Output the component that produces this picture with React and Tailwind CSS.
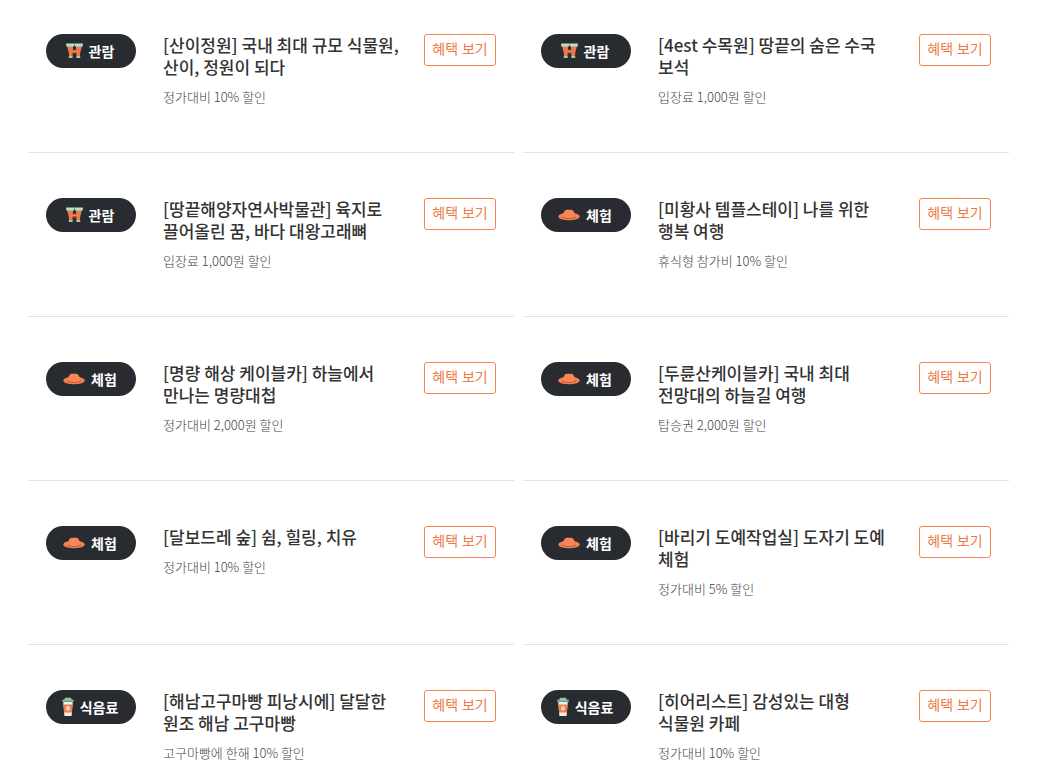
const items = [
  { type: '관람', title: '[산이정원] 국내 최대 규모 식물원, 산이, 정원이 되다', benefit: '정가대비 10% 할인' },
  { type: '관람', title: '[4est 수목원] 땅끝의 숨은 수국 보석', benefit: '입장료 1,000원 할인' },
  { type: '관람', title: '[땅끝해양자연사박물관] 육지로 끌어올린 꿈, 바다 대왕고래뼈', benefit: '입장료 1,000원 할인' },
  { type: '체험', title: '[미황사 템플스테이] 나를 위한 행복 여행', benefit: '휴식형 참가비 10% 할인' },
  { type: '체험', title: '[명량 해상 케이블카] 하늘에서 만나는 명량대첩', benefit: '정가대비 2,000원 할인' },
  { type: '체험', title: '[두륜산케이블카] 국내 최대 전망대의 하늘길 여행', benefit: '탑승권 2,000원 할인' },
  { type: '체험', title: '[달보드레 숲] 쉼, 힐링, 치유', benefit: '정가대비 10% 할인' },
  { type: '체험', title: '[바리기 도예작업실] 도자기 도예 체험', benefit: '정가대비 5% 할인' },
  { type: '식음료', title: '[해남고구마빵 피낭시에] 달달한 원조 해남 고구마빵', benefit: '고구마빵에 한해 10% 할인' },
  { type: '식음료', title: '[히어리스트] 감성있는 대형 식물원 카페', benefit: '정가대비 10% 할인' },
];

function BinocularsIcon() {
  return (
    <svg className="h-4 w-[17px] shrink-0" viewBox="0 0 17 16" aria-hidden="true">
      <path d="M1 3h6v4L6.500 13.500H3.200L2.600 9zM16 3h-6v4l.5 6.500h3.300l.6-4.500z" fill="#ee7a4a" />
      <path d="M6.400 6.400h4.200v4.200H6.400z" fill="#9a4a32" />
      <path d="M5.500 7.600h6v1.700h-6z" fill="#f58a5c" />
      <path d="M0 .5h8v3H.4zM9 .5h8l-.4 3H9z" fill="#b2e2c9" />
      <path d="M8 .5h1v2H8z" fill="#8cc0a8" />
      <path d="M2.800 13h3.800v2H2.800zM10.400 13h3.800v2h-3.800z" fill="#9bccb3" />
    </svg>
  );
}

function HatIcon() {
  return (
    <svg className="h-3 w-[22px] shrink-0" viewBox="0 0 22 12" aria-hidden="true">
      <ellipse cx="11" cy="7.400" rx="10.800" ry="3.900" fill="#f58052" />
      <path d="M4.500 8C5.400 3.500 6.500.8 8.700.7c1.200 0 3.400 0 4.600 0 2.200.1 3.300 2.800 4.200 7.300-3 1.600-10 1.600-13 0z" fill="#f98655" />
      <path d="M4.200 7.500c3 2.200 10.600 2.200 13.600 0l.2.700c-2.600 2.300-11.400 2.300-14 0z" fill="#a9573d" />
    </svg>
  );
}

function CupIcon() {
  return (
    <svg className="h-5 w-3 shrink-0" viewBox="0 0 12 20" aria-hidden="true">
      <path d="M1.200 4.500h9.600L9.600 19H2.400z" fill="#f5ece4" />
      <path d="M1.400 7.500h9.200l-.7 8H2.100z" fill="#f07d50" />
      <ellipse cx="6" cy="11.400" rx="1.900" ry="2.300" fill="#ffe0cf" />
      <path d="M6.600 9.700c-1.200 1.300.3 2-1.200 3.400" stroke="#e39472" strokeWidth=".6" fill="none" />
      <path d="M3 .8h6l.8 1.900h1.900v2H.3v-2h1.900z" fill="#8fc5aa" />
      <path d="M.3 3.900h11.400v.8H.3z" fill="#5f917b" />
    </svg>
  );
}

const icons = { 관람: BinocularsIcon, 체험: HatIcon, 식음료: CupIcon };

function Badge({ type }) {
  const Icon = icons[type];
  return (
    <span className="flex h-[34px] w-[90px] shrink-0 items-center justify-center gap-[6px] rounded-full bg-[#282b30] pr-[2px] text-[14px] leading-5 font-bold text-white">
      <Icon />
      {type}
    </span>
  );
}

function BenefitCard({ item }) {
  return (
    <li className="flex items-start border-b border-[#e2e2e2] px-[18px] pt-[45px] pb-[45px]">
      <Badge type={item.type} />
      <div className="mr-5 ml-[27px] min-w-0 flex-1">
        <h3 className="text-[17px] leading-[22px] font-medium break-keep text-[#333]">{item.title}</h3>
        <p className="mt-[9px] text-[13px] leading-5 font-light text-[#444]">{item.benefit}</p>
      </div>
      <button
        type="button"
        className="flex h-8 w-[72px] shrink-0 items-center justify-center rounded-[3px] border border-[#f58450] pb-[2px] font-['Liberation_Sans','Noto_Sans_CJK_KR',sans-serif] text-[14px] leading-5 text-[#ee7a48]"
      >
        혜택 보기
      </button>
    </li>
  );
}

export default function App() {
  return (
    <main className="h-screen overflow-hidden bg-white pr-[37px] pl-7 font-['Noto_Sans_CJK_KR',sans-serif]">
      <ul className="-mt-[11px] grid grid-cols-2 gap-x-[9px]">
        {items.map((item) => (
          <BenefitCard key={item.title} item={item} />
        ))}
      </ul>
    </main>
  );
}
